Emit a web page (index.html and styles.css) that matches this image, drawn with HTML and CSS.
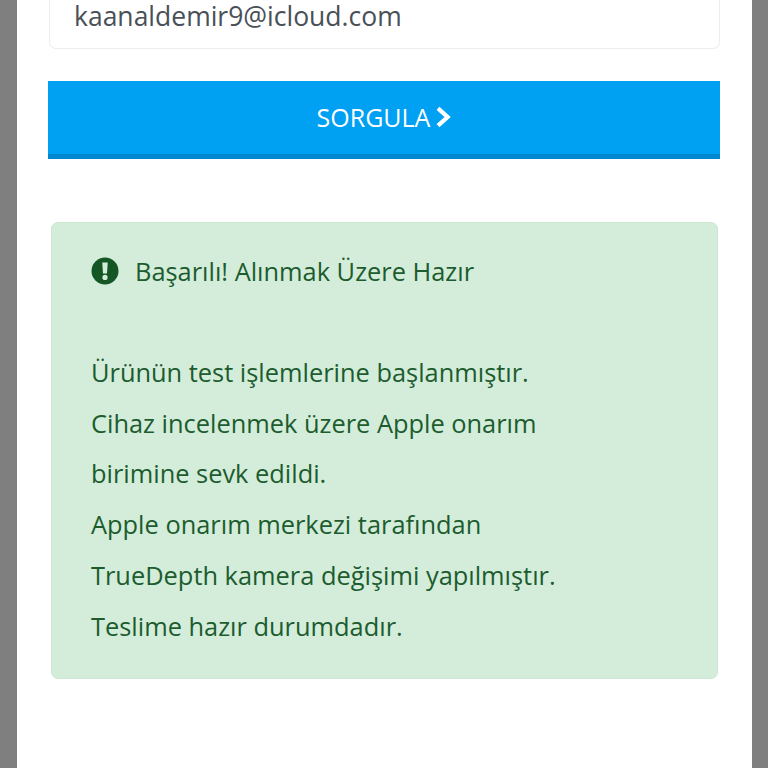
FILE: index.html
```html
<!DOCTYPE html>
<html lang="tr">
<head>
<meta charset="utf-8">
<title>Sorgula</title>
<link rel="stylesheet" href="styles.css">
</head>
<body>
<main class="panel">
  <div class="field">kaanaldemir9@icloud.com</div>
  <button class="submit" type="button">SORGULA
    <svg class="chevron" viewBox="0 0 16 22" width="16" height="24" aria-hidden="true"><path d="M3 2.4 L12.6 11 L3 19.6" fill="none" stroke="#fff" stroke-width="4.2"/></svg>
  </button>
  <section class="alert">
    <div class="alert-head">
      <svg class="alert-icon" viewBox="0 0 28 28" width="28" height="28" aria-hidden="true"><circle cx="14" cy="14" r="13.5" fill="#155724"/><path d="M11.3 5.5h5.4l-.7 11h-4z" fill="#d4edda"/><circle cx="14" cy="20.4" r="2.6" fill="#d4edda"/></svg>
      <span>Başarılı! Alınmak Üzere Hazır</span>
    </div>
    <p class="alert-body">Ürünün test işlemlerine başlanmıştır.<br>Cihaz incelenmek üzere Apple onarım<br>birimine sevk edildi.<br>Apple onarım merkezi tarafından<br>TrueDepth kamera değişimi yapılmıştır.<br>Teslime hazır durumdadır.</p>
  </section>
</main>
</body>
</html>
```
FILE: styles.css
```css
html, body {
  margin: 0;
  height: 768px;
  overflow: hidden;
  background: #7f7f7f;
}
body {
  padding: 0 16px 0 17px;
  font-family: "Open Sans", "Liberation Sans", sans-serif;
  box-sizing: border-box;
}
.panel {
  background: #fff;
  height: 768px;
  padding: 0 32px 0 31px;
  box-sizing: border-box;
}
.field {
  height: 49px;
  margin: 0 0 0 1px;
  padding: 0 0 0 24px;
  box-sizing: border-box;
  border: 1px solid #ecedef;
  border-top: 0;
  border-radius: 0 0 7px 7px;
  font-size: 26.5px;
  line-height: 32px;
  color: #495057;
}
.submit {
  display: flex;
  align-items: center;
  justify-content: center;
  gap: 5px;
  width: 100%;
  height: 78px;
  margin-top: 32px;
  border: 0;
  border-bottom: 5px solid #0288ce;
  background: #00a0f3;
  color: #fff;
  font: 25px "Open Sans", "Liberation Sans", sans-serif;
  padding: 0 0 1px;
}
.alert {
  margin: 63px 2px 0 3px;
  height: 457px;
  padding: 23px 39px 0;
  box-sizing: border-box;
  background: #d4edda;
  border: 1px solid #cbe8d2;
  border-radius: 7px;
  color: #1c5c2e;
  font-size: 25.4px;
  line-height: 50.8px;
}
.alert-head {
  display: flex;
  align-items: center;
  gap: 16px;
}
.alert-body {
  margin: 50px 0 0;
}
```
